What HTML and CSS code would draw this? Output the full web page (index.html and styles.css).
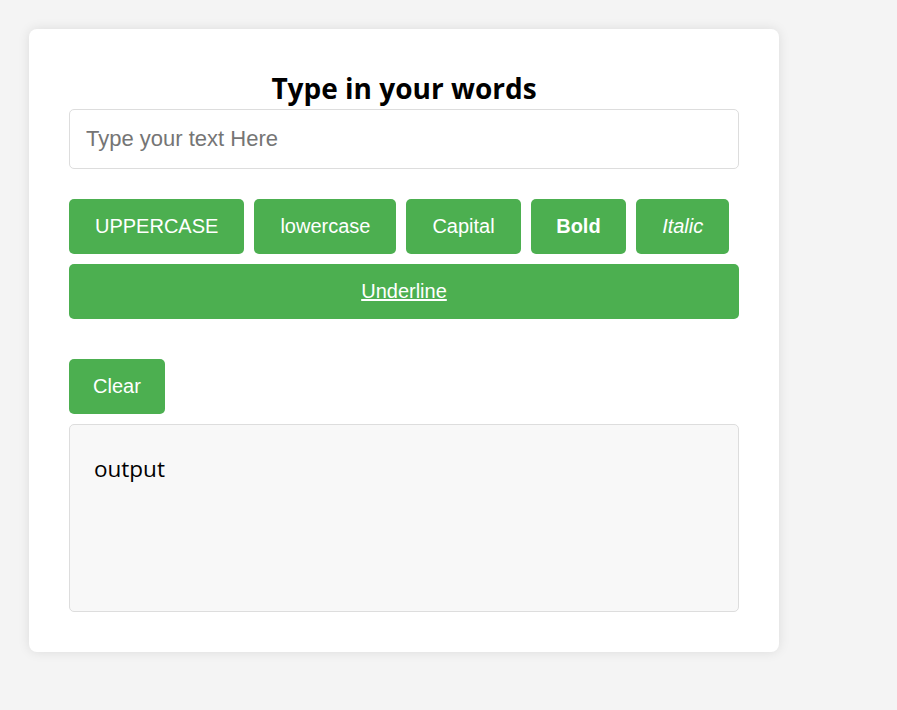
FILE: index.html
```html
<!DOCTYPE html>
<html lang="en">
<head>
<meta charset="utf-8">
<title>Text Utils</title>
<link rel="stylesheet" href="styles.css">
</head>
<body>
<div class="card">
  <h1 class="title">Type in your words</h1>
  <input class="text-input" type="text" placeholder="Type your text Here">
  <div class="actions">
    <button class="btn">UPPERCASE</button>
    <button class="btn">lowercase</button>
    <button class="btn">Capital</button>
    <button class="btn btn-bold">Bold</button>
    <button class="btn btn-italic">Italic</button>
    <button class="btn btn-underline">Underline</button>
  </div>
  <button class="btn btn-clear">Clear</button>
  <div class="output">output</div>
</div>
</body>
</html>
```
FILE: styles.css
```css
html, body {
  margin: 0;
  padding: 0;
}
body {
  background: #f4f4f4;
  padding: 29px;
  font-family: "Open Sans", "Noto Sans", sans-serif;
}
.card {
  width: 750px;
  box-sizing: border-box;
  background: #fff;
  border-radius: 8px;
  box-shadow: 0 0 12px rgba(0, 0, 0, 0.1);
  padding: 36px 40px 40px;
}
.title {
  margin: 2px 0 0;
  text-align: center;
  font-size: 28px;
  line-height: 42px;
  font-weight: 700;
  color: #000;
}
.text-input {
  display: block;
  width: 100%;
  box-sizing: border-box;
  height: 60px;
  border: 1px solid #ddd;
  border-radius: 5px;
  padding: 0 16px;
  font-family: "Liberation Sans", Arial, sans-serif;
  font-size: 22px;
  color: #000;
  outline: none;
  margin: 0 0 30px;
}
.text-input::placeholder {
  color: #757575;
}
.actions {
  display: flex;
  flex-wrap: wrap;
  gap: 10px;
  margin-bottom: 40px;
}
.btn {
  background: #4caf50;
  color: #fff;
  border: 0;
  border-radius: 5px;
  font-family: "Liberation Sans", Arial, sans-serif;
  font-size: 20px;
  line-height: 23px;
  padding: 16px 26px;
  cursor: pointer;
}
.btn-bold {
  font-weight: 700;
  padding-left: 25.5px;
  padding-right: 25.5px;
}
.btn-italic { font-style: italic; }
.btn-underline {
  flex: 1 0 100%;
  text-decoration: underline;
}
.btn-clear {
  display: block;
  padding: 16px 24px;
  margin-bottom: 10px;
}
.output {
  height: 188px;
  box-sizing: border-box;
  background: #f8f8f8;
  border: 1px solid #ddd;
  border-radius: 5px;
  padding: 29px 24px;
  font-size: 22.5px;
  line-height: 30px;
  color: #000;
}
```
